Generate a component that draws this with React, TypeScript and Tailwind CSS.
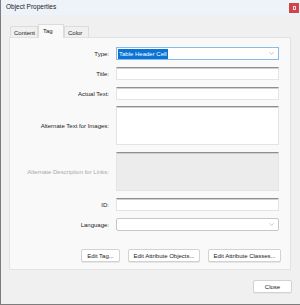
import { ChevronDown } from "lucide-react";

const font = { fontFamily: '"Liberation Sans", Arial, sans-serif' };

const Label = ({ text, muted }: { text: string; muted?: boolean }) => (
    <div className={`w-[106px] pr-[7px] text-right text-[6px] leading-none ${muted ? "text-[#a8a8a8]" : "text-[#1a1a1a]"}`}>
        {text}
    </div>
);

const TextBox = ({ h = "h-[13px]", gray }: { h?: string; gray?: boolean }) => (
    <div className={`w-[163px] ${h} border border-[#e4e4e4] border-t-[#8f8f8f] shadow-[inset_0_1px_0_#cfcfcf] ${gray ? "bg-[#ececec]" : "bg-white"}`} />
);

const Btn = ({ label, w }: { label: string; w: string }) => (
    <button className={`${w} h-[13px] bg-white border border-[#d2d2d2] rounded-[2px] text-[6px] text-[#1a1a1a] leading-none shadow-[0_1px_0_#e6e6e6]`}>
        {label}
    </button>
);

export default function App() {
    return (
        <div className="w-[300px] h-[305px] bg-[#f0f0f0] border-l border-b border-[#7d7d7d] flex flex-col" style={font}>
            {/* Title bar */}
            <div className="h-[15px] bg-[#eef2f9] flex items-center justify-between pl-[5px] pr-[1px]">
                <span className="text-[6.5px] text-[#1a1a1a] leading-none">Object Properties</span>
                <div className="w-[10px] h-[10px] bg-[#d0454b] flex items-center justify-center">
                    <div className="w-[3px] h-[4px] border border-white/80" />
                </div>
            </div>

            {/* Tabs */}
            <div className="flex items-end h-[22px] pl-[9px]">
                <div className="w-[28px] h-[11px] bg-[#f0f0f0] border border-b-0 border-[#dcdcdc] text-[6px] leading-none pt-[3px] pl-[3px] text-[#1a1a1a]">Content</div>
                <div className="w-[26px] h-[14px] bg-[#f9f9f9] border border-b-0 border-[#dcdcdc] text-[6px] leading-none pt-[3px] pl-[4px] text-[#1a1a1a] relative top-[1px]">Tag</div>
                <div className="w-[25px] h-[11px] bg-[#f0f0f0] border border-b-0 border-[#dcdcdc] text-[6px] leading-none pt-[3px] pl-[3px] text-[#1a1a1a]">Color</div>
            </div>

            {/* Panel */}
            <div className="ml-[8px] w-[282px] h-[233px] bg-[#f9f9f9] border border-[#e2e2e2] pt-[9px] flex flex-col">
                <div className="flex items-center">
                    <Label text="Type:" />
                    <div className="w-[163px] h-[13px] bg-white border border-[#86bbea] flex items-center justify-between pl-[1px] pr-[3px]">
                        <span className="bg-[#0a74d6] text-white text-[6px] leading-none px-[1px] py-[2px]">Table Header Cell</span>
                        <ChevronDown size={7} strokeWidth={1.5} className="text-[#777]" />
                    </div>
                </div>
                <div className="flex items-center mt-[7px]">
                    <Label text="Title:" />
                    <TextBox />
                </div>
                <div className="flex items-center mt-[7px]">
                    <Label text="Actual Text:" />
                    <TextBox />
                </div>
                <div className="flex items-center mt-[6px]">
                    <Label text="Alternate Text for Images:" />
                    <TextBox h="h-[39px]" />
                </div>
                <div className="flex items-center mt-[7px]">
                    <Label text="Alternate Description for Links:" muted />
                    <TextBox h="h-[39px]" gray />
                </div>
                <div className="flex items-center mt-[7px]">
                    <Label text="ID:" />
                    <TextBox />
                </div>
                <div className="flex items-center mt-[7px]">
                    <Label text="Language:" />
                    <div className="w-[163px] h-[13px] bg-white border border-[#c6c6c6] rounded-[2px] flex items-center justify-end pr-[3px]">
                        <ChevronDown size={7} strokeWidth={1.5} className="text-[#888]" />
                    </div>
                </div>
                <div className="flex mt-[18px] pl-[71px] gap-[8px]">
                    <Btn label="Edit Tag..." w="w-[39px]" />
                    <Btn label="Edit Attribute Objects..." w="w-[72px]" />
                    <Btn label="Edit Attribute Classes..." w="w-[73px]" />
                </div>
            </div>

            {/* Footer */}
            <div className="flex justify-end pr-[8px] mt-[10px]">
                <Btn label="Close" w="w-[39px]" />
            </div>
        </div>
    );
}
